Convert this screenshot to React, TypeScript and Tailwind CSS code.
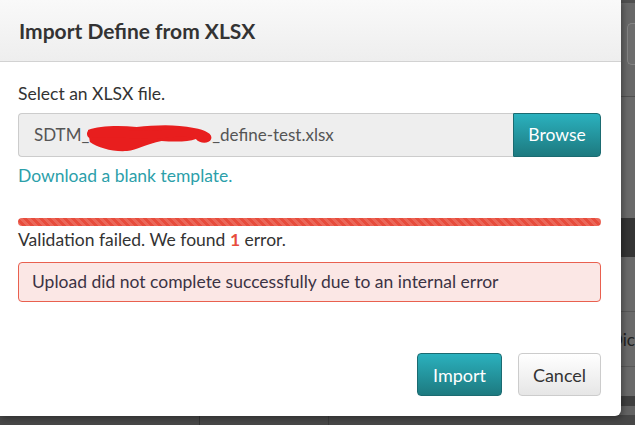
import { useState } from "react";

const font = { fontFamily: "Lato, 'Open Sans', sans-serif" };

const Redaction = () => (
    <svg
        className="pointer-events-none absolute left-[68px] top-[8px]"
        width="128"
        height="34"
        viewBox="0 0 134 34"
        preserveAspectRatio="none"
    >
        <path
            d="M1 8 C12 4 32 3 52 5 C72 3 92 2 112 6 C124 8 132 12 130 17 C128 22 118 22 114 17 C106 20 92 20 78 19 C62 22 52 28 42 29 C27 30 12 26 3 20 Z"
            fill="#e81e1e"
        />
        <path
            d="M4 12 C30 10 55 14 80 12 C100 10 112 10 118 14"
            stroke="#e81e1e"
            strokeWidth="8"
            fill="none"
            strokeLinecap="round"
        />
    </svg>
);

const BehindPage = () => (
    <div className="flex h-full w-full flex-col bg-[#666666]">
        <div className="h-[3px] bg-[#4f4f4f]" />
        <div className="flex h-[94px] justify-end border-b border-[#505050] bg-[#686868] pt-[20px]">
            <div className="h-[42px] w-[8px] rounded-l-[5px] border border-r-0 border-[#858585] bg-[#6d6d6d]" />
        </div>
        <div className="h-[121px] bg-[#6a6a6a]" />
        <div className="h-[39px] bg-[#353535]" />
        <div className="h-[55px] border-b border-[#585858] bg-[#6a6a6a]" />
        <div className="flex h-[55px] items-center justify-end border-b border-[#585858] bg-[#6a6a6a]">
            <span className="text-[17px] leading-none text-[#222]">Dic</span>
        </div>
        <div className="h-[29px] bg-[#6a6a6a]" />
        <div className="h-[10px] bg-[#3f3f3f]" />
        <div className="h-[9px] bg-[#636363]" />
        <div className="flex flex-1 bg-[#474747]">
            <div className="w-[200px] border-r border-[#333]" />
            <div className="w-[129px] border-r border-[#3a3a3a]" />
        </div>
    </div>
);

export default function App() {
    const [fileName] = useState<string>("_define-test.xlsx");

    return (
        <div
            className="relative h-[425px] w-[635px] overflow-hidden bg-[#5a5a5a]"
            style={font}
        >
            <BehindPage />

            <div className="absolute left-0 top-0 flex h-[416px] w-[621px] flex-col rounded-br-[6px] bg-white shadow-[2px_2px_6px_rgba(0,0,0,0.35)]">
                <div className="flex h-[62px] items-center border-b border-[#d2d2d2] bg-gradient-to-b from-[#f9f9f9] to-[#eeeeee] px-[19px]">
                    <h4 className="text-[21px] font-bold text-[#333]">
                        Import Define from XLSX
                    </h4>
                </div>

                <div className="flex flex-1 flex-col px-[18px] pt-[20px] text-[17.5px] leading-[24px] text-[#333]">
                    <label>Select an XLSX file.</label>

                    <div className="mt-[7px] flex h-[44px] w-[583px]">
                        <div className="relative flex flex-1 items-center rounded-l-[4px] border border-r-0 border-[#cccccc] bg-[#eeeeee] pl-[15px] text-[17px] text-[#555]">
                            <span>SDTM_</span>
                            <span className="inline-block w-[123px]" />
                            <span>{fileName}</span>
                            <Redaction />
                        </div>
                        <button className="w-[88px] rounded-r-[4px] border border-[#1b6b71] bg-gradient-to-b from-[#2bb1be] to-[#1d7a80] text-[17.5px] text-white">
                            Browse
                        </button>
                    </div>

                    <a className="mt-[7px] text-[#2c9faa]">Download a blank template.</a>

                    <div className="mt-[30px] h-[8px] w-[583px] rounded-full bg-[#e74c3c] bg-[linear-gradient(45deg,rgba(255,255,255,0.15)_25%,transparent_25%,transparent_50%,rgba(255,255,255,0.15)_50%,rgba(255,255,255,0.15)_75%,transparent_75%,transparent)] bg-[length:8px_8px]" />

                    <p className="mt-[2px]">
                        Validation failed. We found{" "}
                        <span className="font-bold text-[#e74c3c]">1</span> error.
                    </p>

                    <div className="mt-[10px] flex h-[40px] w-[583px] items-center rounded-[4px] border border-[#e9604f] bg-[#fbe7e5] px-[13px] text-[#3b3344]">
                        Upload did not complete successfully due to an internal error
                    </div>

                    <div className="mt-[51px] flex w-[583px] justify-end gap-[16px]">
                        <button className="h-[43px] w-[85px] rounded-[4px] border border-[#1b6b71] bg-gradient-to-b from-[#2bb1be] to-[#1d7a80] text-[18px] text-white">
                            Import
                        </button>
                        <button className="h-[43px] w-[83px] rounded-[4px] border border-[#cccccc] bg-gradient-to-b from-[#ffffff] to-[#e6e6e6] text-[18px] text-[#333]">
                            Cancel
                        </button>
                    </div>
                </div>
            </div>
        </div>
    );
}
